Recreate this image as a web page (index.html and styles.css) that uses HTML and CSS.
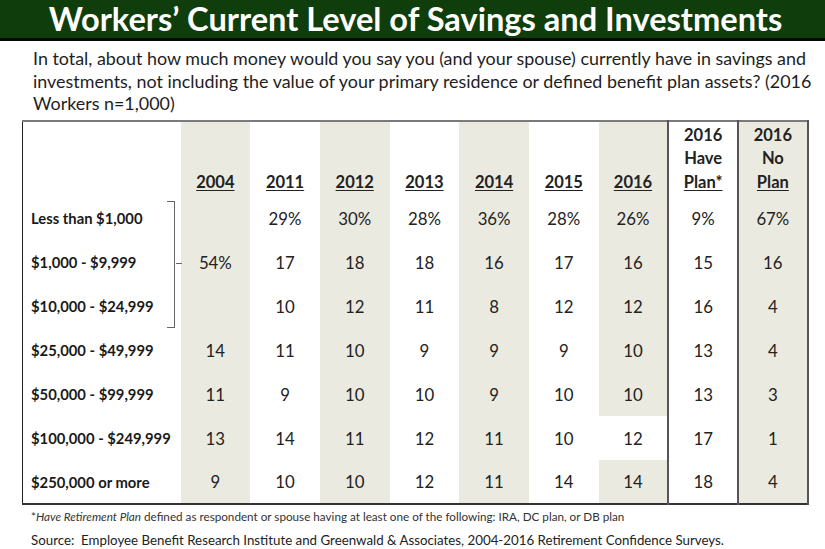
FILE: index.html
```html
<!DOCTYPE html>
<html lang="en">
<head>
<meta charset="utf-8">
<title>Workers’ Current Level of Savings and Investments</title>
<link rel="stylesheet" href="styles.css">
</head>
<body>
<header class="title-bar">
  <h1 class="title">Workers’ Current Level of Savings and Investments</h1>
</header>
<p class="question">In total, about how much money would you say you (and your spouse) currently have in savings and<br>investments, not including the value of your primary residence or defined benefit plan assets? (2016<br>Workers n=1,000)</p>
<div class="table-wrap">
  <table class="data">
    <colgroup>
      <col class="c-label">
      <col class="c-year">
      <col class="c-year">
      <col class="c-year">
      <col class="c-year">
      <col class="c-year">
      <col class="c-year">
      <col class="c-year">
      <col class="c-year">
      <col class="c-year">
    </colgroup>
    <thead>
      <tr>
        <th class="corner"></th>
        <th class="shade"><u>2004</u></th>
        <th><u>2011</u></th>
        <th class="shade"><u>2012</u></th>
        <th><u>2013</u></th>
        <th class="shade"><u>2014</u></th>
        <th><u>2015</u></th>
        <th class="shade"><u>2016</u></th>
        <th class="sep">2016<br>Have<br><u>Plan*</u></th>
        <th class="sep shade last">2016<br>No<br><u>Plan</u></th>
      </tr>
    </thead>
    <tbody>
      <tr>
        <th class="label">Less than $1,000</th>
        <td class="shade merged" rowspan="3">54%</td>
        <td>29%</td><td class="shade">30%</td><td>28%</td><td class="shade">36%</td><td>28%</td><td class="shade">26%</td>
        <td class="sep">9%</td><td class="sep shade last">67%</td>
      </tr>
      <tr>
        <th class="label">$1,000 - $9,999</th>
        <td>17</td><td class="shade">18</td><td>18</td><td class="shade">16</td><td>17</td><td class="shade">16</td>
        <td class="sep">15</td><td class="sep shade last">16</td>
      </tr>
      <tr>
        <th class="label">$10,000 - $24,999</th>
        <td>10</td><td class="shade">12</td><td>11</td><td class="shade">8</td><td>12</td><td class="shade">12</td>
        <td class="sep">16</td><td class="sep shade last">4</td>
      </tr>
      <tr>
        <th class="label">$25,000 - $49,999</th>
        <td class="shade">14</td><td>11</td><td class="shade">10</td><td>9</td><td class="shade">9</td><td>9</td><td class="shade">10</td>
        <td class="sep">13</td><td class="sep shade last">4</td>
      </tr>
      <tr>
        <th class="label">$50,000 - $99,999</th>
        <td class="shade">11</td><td>9</td><td class="shade">10</td><td>10</td><td class="shade">9</td><td>10</td><td class="shade">10</td>
        <td class="sep">13</td><td class="sep shade last">3</td>
      </tr>
      <tr>
        <th class="label">$100,000 - $249,999</th>
        <td class="shade">13</td><td>14</td><td class="shade">11</td><td>12</td><td class="shade">11</td><td>10</td><td>12</td>
        <td class="sep">17</td><td class="sep shade last">1</td>
      </tr>
      <tr>
        <th class="label">$250,000 or more</th>
        <td class="shade">9</td><td>10</td><td class="shade">10</td><td>12</td><td class="shade">11</td><td>14</td><td class="shade">14</td>
        <td class="sep">18</td><td class="sep shade last">4</td>
      </tr>
    </tbody>
  </table>
  <div class="brace"><span class="brace-tick"></span></div>
</div>
<p class="note">*<em>Have Retirement Plan</em> defined as respondent or spouse having at least one of the following: IRA, DC plan, or DB plan</p>
<p class="source">Source:&nbsp; Employee Benefit Research Institute and Greenwald &amp; Associates, 2004-2016 Retirement Confidence Surveys.</p>
</body>
</html>
```

FILE: styles.css
```css
* {
  box-sizing: border-box;
}

html, body {
  margin: 0;
  padding: 0;
  background: #ffffff;
}

body {
  width: 825px;
  height: 549px;
  overflow: hidden;
  font-family: Lato, "Open Sans", "Liberation Sans", sans-serif;
  color: #1e1e1e;
}

.title-bar {
  height: 41px;
  background: #0f3d0c;
  border-bottom: 3px solid #050805;
  display: flex;
  align-items: center;
  justify-content: center;
}

.title {
  margin: 0 0 0 6px;
  font-size: 32.6px;
  font-weight: 700;
  color: #ffffff;
  letter-spacing: 0;
  line-height: 38px;
  white-space: nowrap;
}

.question {
  margin: 6px 0 0 33px;
  font-size: 17.9px;
  line-height: 22.5px;
  color: #1e1e1e;
  white-space: nowrap;
}

.table-wrap {
  position: relative;
  margin: 5.5px 0 0 22px;
  width: 786px;
}

.data {
  border-collapse: collapse;
  table-layout: fixed;
  width: 786px;
  border-top: 2px solid #7a7a7a;
  border-left: 1px solid #222;
  border-bottom: 2px solid #333;
}

.c-label {
  width: 158px;
}

.c-year {
  width: 69.7px;
}

.data th,
.data td {
  padding: 0;
  text-align: center;
}

.data thead th {
  height: 75px;
  vertical-align: bottom;
  padding-bottom: 2px;
  font-size: 16.5px;
  font-weight: 700;
  line-height: 23.5px;
  color: #222;
}

.data u {
  text-decoration: underline;
  text-decoration-thickness: 1px;
  text-underline-offset: 2px;
}

.data tbody td,
.data tbody th {
  height: 44px;
  vertical-align: middle;
}

.data tbody td {
  font-size: 16.8px;
  color: #222;
}

.data .label {
  text-align: left;
  padding-left: 8px;
  font-size: 14.8px;
  font-weight: 700;
  color: #1a1a1a;
  white-space: nowrap;
}

.shade {
  background: #ebeae0;
}

.sep {
  border-left: 2px solid #555;
}

.last {
  border-right: 2px solid #555;
}

.brace {
  position: absolute;
  left: 145px;
  top: 81px;
  width: 8px;
  height: 127px;
  border: 1.5px solid #666;
  border-left: none;
}

.brace-tick {
  position: absolute;
  right: -8px;
  top: 61px;
  width: 6px;
  height: 0;
  border-top: 1.5px solid #666;
}

.note {
  margin: 4px 0 0 31px;
  font-size: 11.7px;
  line-height: 14px;
  color: #333;
  white-space: nowrap;
}

.note em {
  font-style: italic;
}

.source {
  margin: 9px 0 0 31px;
  font-size: 13.3px;
  line-height: 17px;
  color: #222;
  white-space: nowrap;
}
```
